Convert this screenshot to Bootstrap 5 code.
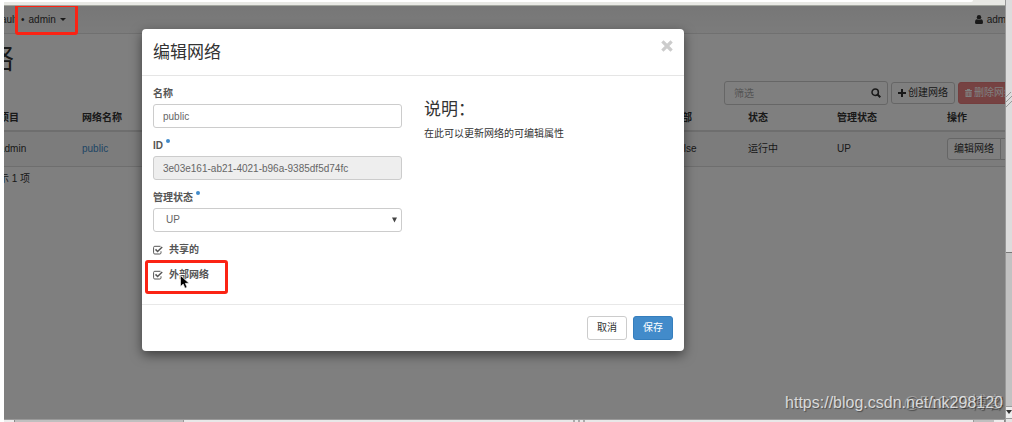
<!DOCTYPE html>
<html lang="zh-CN">
<head>
<meta charset="utf-8">
<meta name="viewport" content="width=device-width, initial-scale=1">
<title>编辑网络</title>
<link href="https://cdn.jsdelivr.net/npm/bootstrap@5.3.0/dist/css/bootstrap.min.css" rel="stylesheet">
<style>
  body { font: 10px/14px "Liberation Sans", "Noto Sans CJK SC", sans-serif; color: #333; background: #fff; }
  a { color: #428bca; text-decoration: none; }
  svg { display: block; fill: currentColor; }

  /* browser frame */
  .chrome-top { height: 6px; background: #e8e8e4; border-bottom: 1px solid #a3a69f; }
  .chrome-top div { height: 2px; margin-right: 32px; background: #fff; border-radius: 0 0 6px 0; }
  .vbar { width: 7px; background: #c2c2c2; border-left: 1px solid #999; }
  .vthumb { height: 60%; background: #dcdcdc; border-bottom: 1px solid #777; padding-top: 92px; }
  .vbtn { height: 13px; background: #ececec; border: 1px solid #999; border-width: 1px 0; padding-top: 3px; }
  .vend { height: 3px; background: #e4e4e4; }
  .hbar { height: 3px; background: #bfbfbf; border-top: 1px solid #999; }
  .hbtn { width: 11px; background: #ececec; border-right: 1px solid #888; }
  .htrack { width: 168px; }
  .hthumb { background: #e8e8e8; border: 1px solid #999; border-width: 0 1px; gap: 3px; }
  .hthumb span { width: 2px; height: 2px; background: #aaa; }
  .hgap { width: 20px; }

  /* dashboard behind the dialog, scrolled sideways */
  .screen { background: #fff; }
  .topnav { height: 28px; background: linear-gradient(#eee, #f8f8f8); border-bottom: 1px solid #e0e0e0; margin-right: -9px; }
  .project { margin-left: -17px; }
  .caret { border: 3px solid transparent; border-top-color: currentColor; border-bottom: 0; }
  .page-area { margin: 0 -18px 0 -10px; }
  .page-title { font-size: 28px; line-height: 34px; margin: 9px 0 0 -36px; }
  .tools { margin: 4px 2px 0 0; gap: 3px; }
  .btn { --bs-btn-font-size: 10px; --bs-btn-line-height: 14px; --bs-btn-padding-x: 9px; --bs-btn-padding-y: 4px; --bs-btn-border-radius: 3px; }
  .btn-plain { --bs-btn-bg: #fff; --bs-btn-border-color: #ccc; --bs-btn-color: #333; }
  .btn-slim { --bs-btn-padding-x: 6px; --bs-btn-padding-y: 3px; gap: 2px; }
  .btn-del { --bs-btn-bg: #ec8484; --bs-btn-border-color: #e87c7c; --bs-btn-color: #fff; }
  .btn-save { --bs-btn-bg: #428bca; --bs-btn-border-color: #357ebd; --bs-btn-color: #fff; }
  .field { height: 24px; padding: 4px 9px; border: 1px solid #ccc; border-radius: 3px; font-size: 10px; line-height: 14px; color: #666; background-color: #fff; }
  .field:disabled { background-color: #eee; color: #666; opacity: 1; }
  .search { width: 164px; }
  .search input { padding-right: 26px; }
  .search input::placeholder { color: #aaa; }
  .search svg { position: absolute; right: 7px; top: 7px; fill: none; }
  .nets { --bs-table-bg: transparent; --bs-table-color: #333; table-layout: fixed; border-color: #ddd; }
  .nets > thead th { padding: 6px 5px 5px; border-bottom: 2px solid #ddd; }
  .nets > tbody td { padding: 0 5px; height: 35px; background: #f9f9f9; }
  .c-proj { width: 83px; } .c-ext { width: 76px; } .c-state { width: 89px; } .c-admin { width: 110px; } .c-act { width: 81px; }
  .count { margin: 5px 0 0 -5px; }
  .shade { background: rgba(0,0,0,.5); }

  /* dialog */
  .dialog-wrap { left: 138px; top: 23px; width: 542px; max-width: calc(100% - 150px); }
  .modal-content { border: 0; border-radius: 4px; box-shadow: 0 4px 12px rgba(0,0,0,.5); background: #fff; color: #333; }
  .modal-header { padding: 11px 11px 9px; border-bottom: 1px solid #e5e5e5; }
  .modal-title, .help-title { font-size: 17px; line-height: 26px; font-weight: 400; margin: 0; }
  .help-title { margin-top: 10px; }
  .modal-header button { color: #ccc; margin-bottom: 14px; }
  .modal-body { padding: 11px; }
  .modal-body .row { --bs-gutter-x: 22px; }
  .modal-footer { padding: 11px; gap: 6px; border-top: 1px solid #e8e8e8; }
  .modal-footer > * { margin: 0; }
  .form-row { margin-bottom: 11px; }
  .form-row label { color: #555; font-weight: 700; }
  .form-row > .top-label { display: flex; margin-bottom: 3px; gap: 3px; }
  .star { width: 4px; height: 4px; border-radius: 2px; background: #428bca; }
  select.field { appearance: none; background: #fff url("data:image/svg+xml,%3Csvg xmlns='http://www.w3.org/2000/svg' width='5' height='6'%3E%3Cpath d='M0 .5h5L2.500 5.500z' fill='%23444'/%3E%3C/svg%3E") no-repeat right 4px center; padding-left: 12px; }
  .tick { appearance: none; width: 10px; height: 10px; margin: 0; background: url("data:image/svg+xml,%3Csvg xmlns='http://www.w3.org/2000/svg' viewBox='0 0 10 10' fill='none' stroke='%23555'%3E%3Cpath d='M7.500 1.300H1.800Q.6 1.300.6 2.500V7.800Q.6 9 1.800 9H6.800Q8 9 8 7.800V6.300'/%3E%3Cpath d='M2.500 4.400 4.600 6.500 9.200 2' stroke-width='1.500'/%3E%3C/svg%3E"); }
  .tick-row { gap: 6px; }

  /* marks laid over the page */
  .mark-box { position: absolute; border: 3px solid #fb2314; border-radius: 3px; pointer-events: none; }
  .mark-nav { left: 11px; top: -2px; width: 63px; height: 31px; }
  .mark-check { left: -8px; top: -8px; width: 83px; height: 34px; }
  .pointer { position: absolute; left: 27px; top: 7px; }
  .stamp { position: absolute; right: 2px; bottom: 6px; font-size: 16px; line-height: 20px; color: rgba(255,255,255,.75); text-shadow: 1px 1px 1px rgba(0,0,0,.4); white-space: nowrap; }
  .stamp-dim { color: rgba(255,255,255,.3); }
</style>
</head>
<body>
<div class="d-flex vh-100 ps-1 overflow-hidden">
  <div class="d-flex flex-column flex-grow-1 overflow-hidden">
    <div class="chrome-top flex-shrink-0"><div></div></div>

    <main class="screen position-relative flex-grow-1 overflow-hidden">
      <nav class="topnav d-flex justify-content-between align-items-center">
        <a href="#" class="project d-flex align-items-center gap-1 text-reset"><span>default</span><span>•</span><span>admin</span><span class="caret"></span></a>
        <a href="#" class="d-flex align-items-center gap-1 text-reset">
          <svg width="8" height="9" viewBox="0 0 8 9"><circle cx="4" cy="2.300" r="2.200"/><path d="M0 7.500Q0 4.300 2 4.200Q4 5.600 6 4.200Q8 4.300 8 7.500Q8 9 6.500 9H1.500Q0 9 0 7.500z"/></svg>
          <span>admin</span></a>
      </nav>

      <div class="page-area">
        <h1 class="page-title fw-normal">网络</h1>
        <div class="tools d-flex justify-content-end align-items-center">
          <div class="search position-relative">
            <input type="text" class="field d-block w-100" placeholder="筛选" aria-label="筛选">
            <svg width="10" height="10" viewBox="0 0 10 10" stroke="currentColor"><circle cx="4.200" cy="4.200" r="3.200" stroke-width="1.500"/><path d="M6.500 6.500 9.300 9.300" stroke-width="2"/></svg>
          </div>
          <button type="button" class="btn btn-plain btn-slim d-flex align-items-center">
            <svg width="8" height="8" viewBox="0 0 8 8"><path d="M3 0h2v3h3v2H5v3H3V5H0V3h3z"/></svg>创建网络</button>
          <button type="button" class="btn btn-del btn-slim d-flex align-items-center">
            <svg width="7" height="8" viewBox="0 0 7 8"><path fill-rule="evenodd" d="M2 0h3v1h2v1H0V1h2zM.5 2.500h6V8h-6zM1.700 3.500v3.500h.6V3.500zM3.200 3.500v3.500h.6V3.500zM4.700 3.500v3.500h.6V3.500z"/></svg>删除网络</button>
        </div>

        <table class="table nets mb-0 align-middle">
          <colgroup><col class="c-proj"><col><col class="c-ext"><col class="c-state"><col class="c-admin"><col class="c-act"></colgroup>
          <thead><tr><th>项目</th><th>网络名称</th><th>外部</th><th>状态</th><th>管理状态</th><th>操作</th></tr></thead>
          <tbody><tr>
            <td>admin</td><td><a href="#">public</a></td><td>False</td><td>运行中</td><td>UP</td>
            <td><div class="btn-group">
              <button type="button" class="btn btn-plain btn-slim text-nowrap">编辑网络</button>
              <button type="button" class="btn btn-plain btn-slim d-flex align-items-center" aria-label="更多"><span class="caret"></span></button>
            </div></td>
          </tr></tbody>
        </table>
        <p class="count">显示 1 项</p>
      </div>

      <div class="shade position-absolute top-0 start-0 w-100 h-100"></div>
      <div class="mark-box mark-nav"></div>

      <div class="dialog-wrap position-absolute" role="dialog" aria-labelledby="dlgTitle">
        <form class="modal-content">
          <div class="modal-header">
            <h2 class="modal-title" id="dlgTitle">编辑网络</h2>
            <button type="button" class="border-0 bg-transparent p-0" aria-label="关闭">
              <svg width="12" height="12" viewBox="0 0 12 12" stroke="currentColor"><path d="M2.500 2.500 9.500 9.500M9.500 2.500 2.500 9.500" stroke-width="3.200" stroke-linecap="square"/></svg>
            </button>
          </div>
          <div class="modal-body">
            <div class="row">
              <div class="col-6">
                <div class="form-row">
                  <label class="top-label" for="fName">名称</label>
                  <input type="text" id="fName" class="field d-block w-100" value="public">
                </div>
                <div class="form-row">
                  <label class="top-label" for="fId">ID <span class="star"></span></label>
                  <input type="text" id="fId" class="field d-block w-100" value="3e03e161-ab21-4021-b96a-9385df5d74fc" disabled>
                </div>
                <div class="form-row">
                  <label class="top-label" for="fState">管理状态 <span class="star"></span></label>
                  <select id="fState" class="field d-block w-100"><option>UP</option><option>DOWN</option></select>
                </div>
                <div class="form-row tick-row d-flex align-items-center">
                  <input type="checkbox" class="tick" id="fShared" checked>
                  <label for="fShared">共享的</label>
                </div>
                <div class="form-row tick-row d-flex align-items-center position-relative">
                  <input type="checkbox" class="tick" id="fExt" checked>
                  <label for="fExt">外部网络</label>
                  <div class="mark-box mark-check"></div>
                  <svg class="pointer" width="10" height="14" viewBox="0 0 10 14" stroke="#fff" stroke-width=".6"><path fill="#000" d="M.5.5V11.500L3.200 9 5 13.200 7 12.300 5.300 8.300H9z"/></svg>
                </div>
              </div>
              <div class="col-6">
                <h3 class="help-title">说明：</h3>
                <p class="mb-0 mt-1">在此可以更新网络的可编辑属性</p>
              </div>
            </div>
          </div>
          <div class="modal-footer">
            <button type="button" class="btn btn-plain">取消</button>
            <button type="submit" class="btn btn-save">保存</button>
          </div>
        </form>
      </div>

      <div class="stamp stamp-dim">@51CTO博客</div>
      <div class="stamp">https://blog.csdn.net/nk298120</div>
    </main>

    <div class="hbar d-flex flex-shrink-0">
      <div class="hbtn"></div><div class="htrack"></div>
      <div class="hthumb flex-grow-1 d-flex justify-content-center"><span></span><span></span><span></span></div>
      <div class="hgap"></div><div class="hbtn"></div>
    </div>
  </div>

  <div class="vbar d-flex flex-column flex-shrink-0">
    <div class="vthumb">
      <svg width="6" height="16" viewBox="0 0 6 16" stroke="#999"><path d="M0 5 5 0M0 10 6 4M0 15 6 9"/></svg>
    </div>
    <div class="flex-grow-1"></div>
    <div class="vbtn"><svg width="6" height="5" viewBox="0 0 6 5"><path d="M0 0h6L3 4z"/></svg></div>
    <div class="vend"></div>
  </div>
</div>
<script src="https://cdn.jsdelivr.net/npm/bootstrap@5.3.0/dist/js/bootstrap.bundle.min.js"></script>
</body>
</html>
